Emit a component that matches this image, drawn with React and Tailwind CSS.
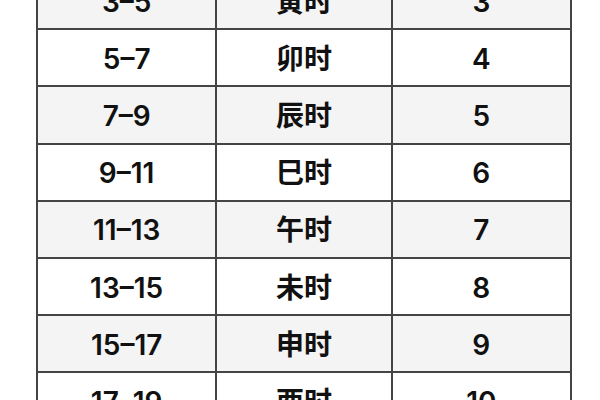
const rows = [
  ['3–5', '寅时', '3'],
  ['5–7', '卯时', '4'],
  ['7–9', '辰时', '5'],
  ['9–11', '巳时', '6'],
  ['11–13', '午时', '7'],
  ['13–15', '未时', '8'],
  ['15–17', '申时', '9'],
  ['17–19', '酉时', '10'],
]

export default function App() {
  return (
    <div className="w-[600px] h-[400px] overflow-hidden bg-white">
      <div
        className="ml-[36px] mt-[-27px] w-[536px] border-x-2 border-[#444] text-[#111] text-[28px] font-semibold"
        style={{ fontFamily: 'Inter, "Noto Sans CJK SC", sans-serif' }}
      >
        {rows.map((r, i) => (
          <div
            key={i}
            className={`grid grid-cols-3 h-[57.2px] border-b-2 border-[#444] ${i % 2 === 0 ? 'bg-[#f4f4f4]' : 'bg-white'}`}
          >
            <div className="flex items-center justify-center pt-[2px]">{r[0]}</div>
            <div className="flex items-center justify-center pt-[2px] border-x-2 border-[#444]">{r[1]}</div>
            <div className="flex items-center justify-center pt-[2px]">{r[2]}</div>
          </div>
        ))}
      </div>
    </div>
  )
}
